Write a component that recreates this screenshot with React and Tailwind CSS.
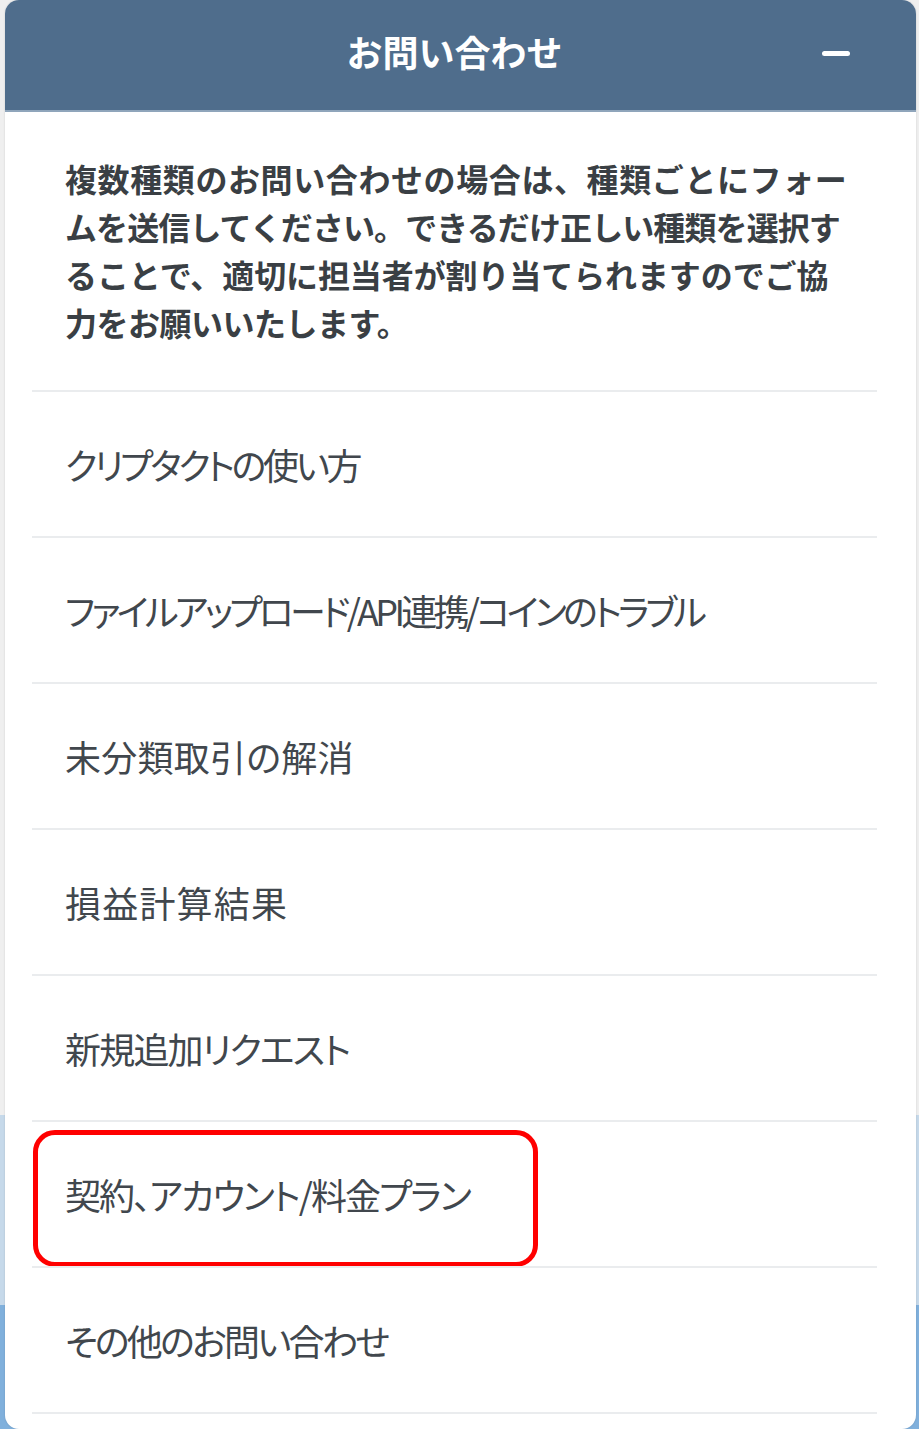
import React from 'react';

const FONT = "font-['Noto_Sans_CJK_JP','Noto_Sans',sans-serif]";

const introLines = [
  { text: '複数種類のお問い合わせの場合は、種類ごとにフォー', cls: 'tracking-[0.6px]' },
  { text: 'ムを送信してください。できるだけ正しい種類を選択す', cls: 'tracking-[-0.9px]' },
  { text: 'ることで、適切に担当者が割り当てられますのでご協', cls: 'tracking-[-0.1px]' },
  { text: '力をお願いいたします。', cls: 'tracking-[-0.5px]' },
];

const topics = [
  { label: 'クリプタクトの使い方', cls: 'tracking-[-3.3px]' },
  { label: 'ファイルアップロード/API連携/コインのトラブル', cls: 'tracking-[-3.7px]' },
  { label: '未分類取引の解消', cls: 'tracking-[0.25px]' },
  { label: '損益計算結果', cls: 'tracking-[1.2px]' },
  { label: '新規追加リクエスト', cls: 'tracking-[-1.8px]' },
  { label: '契約、アカウント/料金プラン', cls: 'tracking-[-1.9px]', highlight: true },
  { label: 'その他のお問い合わせ', cls: 'tracking-[-2.7px]' },
];

const App = () => {
  return (
    <div
      className={`min-h-[1429px] w-[919px] bg-[linear-gradient(to_bottom,#efefef_0,#efefef_1115px,#c6d9ea_1115px,#c6d9ea_1305px,#80b0dc_1305px)] ${FONT}`}
    >
      <div className="ml-[5px] w-[911px] h-[1429px] bg-white rounded-[14px] overflow-hidden shadow-[0_0_2px_rgba(0,0,0,0.15)]">
        {/* header */}
        <div className="relative h-[112px] bg-[#4f6d8c] border-b-2 border-[#8fa5bb] flex items-center justify-center">
          <h1 className="mr-[12px] -mt-[8px] text-[36px] font-bold text-white leading-none">お問い合わせ</h1>
          <button className="absolute right-[66px] top-[51px] w-[28px] h-[5px] rounded-full bg-white" aria-label="閉じる" />
        </div>

        {/* intro */}
        <div className="pt-[42px] pb-[44px] pl-[60px] pr-[30px]">
          {introLines.map((line) => (
            <p
              key={line.text}
              className={`text-[32px] leading-[48px] font-bold text-[#3a3f44] whitespace-nowrap ${line.cls}`}
            >
              {line.text}
            </p>
          ))}
        </div>

        {/* topics */}
        <ul className="ml-[27px] mr-[39px] border-b-2 border-[#eaecee]">
          {topics.map((topic) => (
            <li
              key={topic.label}
              className="relative h-[146px] border-t-2 border-[#eaecee] flex items-center pl-[33px]"
            >
              <span
                className={`text-[36px] text-[#41474d] leading-none whitespace-nowrap [font-feature-settings:'palt'] ${topic.cls}`}
              >
                {topic.label}
              </span>
              {topic.highlight && (
                <div className="absolute left-[1px] top-[8px] w-[505px] h-[137px] border-[5px] border-[#ff0000] rounded-[22px]" />
              )}
            </li>
          ))}
        </ul>
      </div>
    </div>
  );
};

export default App;
